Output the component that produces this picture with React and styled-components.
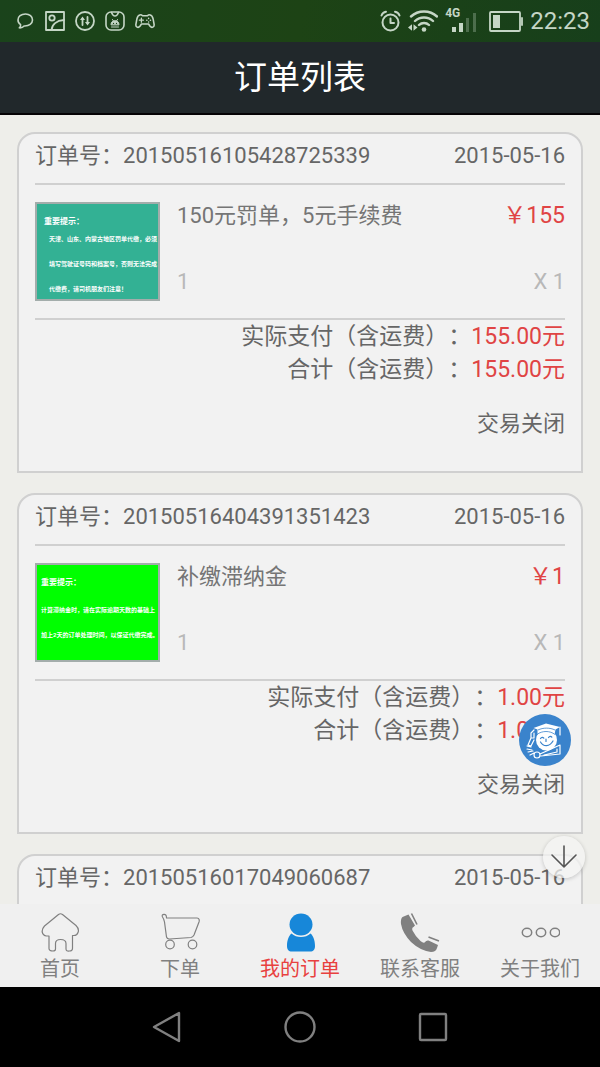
import React from 'react'
import styled, { createGlobalStyle, css } from 'styled-components'

const GlobalStyle = createGlobalStyle`
    * {
        box-sizing: border-box;
    }
    body {
        margin: 0;
        background: #eeeeea;
        font-family: Roboto, 'Noto Sans CJK SC', sans-serif;
        text-spacing-trim: space-all;
    }
    button {
        border: 0;
        padding: 0;
        background: none;
        font: inherit;
        cursor: pointer;
    }
`

const Screen = styled.div`
    display: flex;
    flex-direction: column;
    height: 100vh;
`

const StatusBar = styled.div`
    display: flex;
    align-items: center;
    justify-content: space-between;
    flex: none;
    height: 42px;
    padding: 0 10px 0 15px;
    background: linear-gradient(100deg, #1a431b, #1d4315 50%, #173f1b);
    color: #c5d6c6;
`

const StatusGroup = styled.div`
    display: flex;
    align-items: center;
    gap: ${({ $gap }) => $gap}px;
`

const Clock = styled.time`
    font-size: 24px;
    line-height: 42px;
`

const Signal = styled.div`
    display: flex;
    align-items: flex-start;
    height: 25px;
    padding-right: 5px;
`

const Network = styled.span`
    margin-right: -8px;
    font-size: 12px;
    line-height: 8px;
    font-weight: 700;
`

const TitleBar = styled.header`
    display: flex;
    align-items: center;
    justify-content: center;
    flex: none;
    height: 73px;
    background: #21282b;
    border-bottom: 2px solid #050305;
`

const Title = styled.h1`
    margin: 0;
    font-size: 33px;
    line-height: 40px;
    font-weight: 400;
    color: #ffffff;
`

const Main = styled.main`
    position: relative;
    flex: 1;
    min-height: 0;
`

const OrderList = styled.div`
    display: flex;
    flex-direction: column;
    gap: 20px;
    height: 100%;
    padding: 17px 17px 0;
    overflow-y: auto;
    scrollbar-width: none;
`

const Card = styled.article`
    flex: none;
    padding: 0 16px 29px;
    background: #f2f2f2;
    border: 2px solid #d0d0d0;
    border-radius: 18px 18px 0 0;
    font-size: 22px;
    line-height: 36px;
    color: #666666;
`

const CardHead = styled.div`
    display: flex;
    justify-content: space-between;
    padding: 4px 0 9px;
    border-bottom: 2px solid #d0d0d0;
`

const Item = styled.div`
    display: flex;
    gap: 17px;
    padding: 17px 0;
    border-bottom: 2px solid #d0d0d0;
`

const Thumb = styled.div`
    flex: none;
    width: 125px;
    height: 99px;
    padding: 14px 0 0 ${({ $inset }) => $inset}px;
    background: ${({ $color }) => $color};
    border: 2px solid #a3adab;
    color: #ffffff;
    white-space: nowrap;
    overflow: hidden;
`

const ThumbTitle = styled.div`
    font-size: 8px;
    line-height: 8px;
    font-weight: 700;
`

const ThumbText = styled.div`
    padding-top: ${({ $top }) => $top}px;
    padding-left: ${({ $indent }) => $indent}px;
    font-size: 6px;
    line-height: 25px;
    font-weight: 700;
`

const ItemInfo = styled.div`
    display: flex;
    flex: 1;
    flex-direction: column;
    justify-content: space-between;
`

const ItemRow = styled.div`
    display: flex;
    justify-content: space-between;
    line-height: ${({ $muted }) => ($muted ? 38 : 28)}px;
    color: ${({ $muted }) => ($muted ? '#b8b8b8' : '#757575')};
`

const Price = styled.span`
    font-size: 23px;
    color: #e04444;
`

const Totals = styled.div`
    font-size: 23px;
    line-height: 33px;
    text-align: right;
`

const State = styled.div`
    padding-top: 20px;
    text-align: right;
`

const floating = css`
    position: absolute;
    display: flex;
    align-items: center;
    justify-content: center;
    border-radius: 50%;
`

const HelpButton = styled.button`
    ${floating}
    right: 29px;
    bottom: 138px;
    width: 52px;
    height: 52px;
    background: #3a83cc;
`

const DownButton = styled.button`
    ${floating}
    right: 15px;
    bottom: 26px;
    width: 42px;
    height: 42px;
    background: rgba(244, 244, 243, 0.75);
    box-shadow: 0 1px 4px rgba(0, 0, 0, 0.2);
    color: #555555;
`

const TabBar = styled.nav`
    display: grid;
    grid-template-columns: repeat(5, 1fr);
    flex: none;
    height: 83px;
    padding-top: 8px;
    background: #f0f0f0;
`

const Tab = styled.a`
    display: flex;
    flex-direction: column;
    align-items: center;
    font-size: 20px;
    line-height: 30px;
    text-decoration: none;
    color: ${({ $active }) => ($active ? '#e8413f' : '#808080')};
`

const SystemBar = styled.div`
    display: flex;
    align-items: center;
    justify-content: center;
    gap: 101px;
    flex: none;
    height: 80px;
    background: #000000;
`

const SystemButton = styled.button`
    display: flex;
    color: #808080;
`

const Svg = ({ w, h, children, sw = 2 }) => (
    <svg
        width={w}
        height={h}
        viewBox={`0 0 ${w} ${h}`}
        fill="none"
        stroke="currentColor"
        strokeWidth={sw}
        strokeLinecap="round"
        strokeLinejoin="round"
        aria-hidden="true"
    >
        {children}
    </svg>
)

const ChatIcon = () => (
    <Svg w={20} h={20} sw={1.6}>
        <path d="M10.500 3C6 3 3 5.600 3 8.900c0 2 1 3.700 2.600 4.700.2 1.300-.2 2.400-1.300 3.200 2.100.2 3.600-.4 4.800-1.800 5 .3 8.400-2.600 8.400-6.100C17.500 5.600 14.500 3 10.500 3z" />
    </Svg>
)

const PictureIcon = () => (
    <Svg w={20} h={20} sw={1.8}>
        <rect x="1" y="1" width="18" height="18" />
        <circle cx="7" cy="7" r="2.700" />
        <path d="M6.500 19C7 13.500 11.500 9.500 19 9" />
    </Svg>
)

const TransferIcon = () => (
    <Svg w={20} h={20} sw={1.8}>
        <circle cx="10" cy="10" r="9" />
        <path d="M7.500 14V8M12.500 6v6" />
        <path d="M5 9l2.500-3.500L10 9zM10 11l2.500 3.500L15 11z" fill="currentColor" stroke="none" />
    </Svg>
)

const RobotIcon = () => (
    <Svg w={20} h={20} sw={1.6}>
        <rect x="1" y="1" width="18" height="18" rx="5" />
        <path d="M6.500 1.500C7.500 4 8.500 5 10 5s2.500-1 3.500-3.500" />
        <path d="M6 13.500c0-2.300 1.600-3.800 4-3.800s4 1.500 4 3.800zM7.500 8.500l.8 1.200M12.500 8.500l-.8 1.200" fill="currentColor" strokeWidth="1" />
        <path d="M6.500 16h7" strokeWidth="1" />
        <path d="M8.500 12.300v.1M11.500 12.300v.1" stroke="#1c431a" strokeWidth="1.300" />
    </Svg>
)

const GamepadIcon = () => (
    <Svg w={20} h={20} sw={1.6}>
        <path d="M5.500 3.800c1.200-.4 1.700.9 2.500.9h4c.8 0 1.300-1.300 2.500-.9 2.300.5 3.100 1.600 3.600 4l1 5.500c.4 2.900-2.300 4-4 2l-1.600-2.300H6.500l-1.600 2.300c-1.700 2-4.400.9-4-2l1-5.500c.5-2.400 1.300-3.500 3.600-4z" />
        <path d="M6.400 7.200v4M4.400 9.200h4" strokeWidth="1.300" />
        <path d="M13.600 7.300v.1M13.600 11v.1M11.800 9.200h.1M15.400 9.200h.1" strokeWidth="1.500" />
    </Svg>
)

const AlarmIcon = () => (
    <Svg w={21} h={22} sw={2}>
        <circle cx="10.500" cy="12.500" r="8" />
        <path d="M10.500 8.500v4.500h3.500M1.500 5.500c.7-2 2.300-3.300 4.500-3.800M19.500 5.500c-.7-2-2.300-3.300-4.500-3.800" />
    </Svg>
)

const WifiIcon = () => (
    <Svg w={30} h={22} sw={2.400}>
        <path d="M3 6.500c7.200-6.700 18.800-6.700 26 0M7 11c5-4.700 13-4.700 18 0M11 15c2.800-2.700 7.200-2.700 10 0" />
        <circle cx="16" cy="19.500" r="2.300" fill="currentColor" stroke="none" />
        <path d="M0 17.500l4-3.300v6.600zM9.500 17.500l-4-3.300v6.600z" fill="currentColor" stroke="none" />
    </Svg>
)

const BarsIcon = () => (
    <svg width="25" height="24" viewBox="0 0 25 24" fill="currentColor" aria-hidden="true">
        <rect x="0" y="18" width="4" height="5" />
        <rect x="7" y="14" width="4" height="9" />
        <rect x="14" y="9" width="3" height="14" opacity="0.3" />
        <rect x="21" y="4" width="3" height="19" opacity="0.3" />
    </svg>
)

const BatteryIcon = () => (
    <Svg w={34} h={21} sw={1.800}>
        <rect x="1" y="1" width="30" height="19" rx="1" />
        <path d="M33 7v7" />
        <rect x="4" y="4" width="7" height="13" fill="currentColor" stroke="none" />
    </Svg>
)

const HomeIcon = () => (
    <Svg w={40} h={42} sw={1.2}>
        <path d="M18.500 2.500Q20.500 1 22.500 2.500L36 13.500Q39.500 17 38 20.500Q37 23.500 34 23.500H32.500V36.500Q32.500 39 29.500 39Q26 39.500 26 37V31.500Q26 27.500 20.500 27.500Q15.500 27.500 15.500 31.500V37Q15.500 39 13 39Q9 39 9 36.500V24H6.500Q3 23.500 2.200 20Q1.800 17 4.500 14z" />
    </Svg>
)

const CartIcon = () => (
    <Svg w={40} h={42} sw={1.2}>
        <path d="M6.500 6H37Q40 6.500 39 10L34 23Q33 25 31 25.500L9.500 27Q7 27 6.500 25L4.500 10Q4 7 2.500 5Q1.500 2.500 4 2.300Q6.500 2.200 6.500 6z" />
        <circle cx="10" cy="32.500" r="4.300" />
        <circle cx="32.500" cy="32.500" r="4.300" />
    </Svg>
)

const UserIcon = () => (
    <svg width="40" height="42" viewBox="0 0 40 42" fill="#1787d9" aria-hidden="true">
        <ellipse cx="21" cy="12.500" rx="11.500" ry="11" />
        <path d="M11.500 21.500c5 4.800 14 4.800 19 0 2.500 2 4.500 6.500 4.500 12.500 0 3.500-1.500 5.500-5 5.500H12c-3.500 0-5-2-5-5.500 0-6 2-10.500 4.500-12.500z" />
    </svg>
)

const PhoneIcon = () => (
    <svg width="40" height="42" viewBox="0 0 40 42" fill="currentColor" aria-hidden="true">
        <path d="M8.500 2.500L2.500 5Q0.500 6.500 1 12Q2.500 21 11 30Q20 38.500 31 40Q36 40 37 36L38 33L28.500 28.500Q26.500 28 24.500 30.500Q23.500 31.500 20.500 29Q15.500 24.500 12.500 18.500Q11.500 16 13.500 15L15 13.500z" />
        <path d="M11.500 1.500L17 12.500M28.500 25L39 29" stroke="currentColor" strokeWidth="1.600" />
    </svg>
)

const MoreIcon = () => (
    <Svg w={40} h={42} sw={1.500}>
        <ellipse cx="7" cy="20.500" rx="4.700" ry="4.200" />
        <ellipse cx="21" cy="20.500" rx="4.700" ry="4.200" />
        <ellipse cx="35" cy="20.500" rx="4.700" ry="4.200" />
    </Svg>
)

const ScholarIcon = () => (
    <svg width="52" height="52" viewBox="0 0 52 52" fill="#ffffff" aria-hidden="true">
        <ellipse cx="27.500" cy="26" rx="10.500" ry="10.500" />
        <path d="M14.500 14L27 9.500l14 3.500-4.500 2.500-1 5c-5-3.500-12-3.500-17 0v-5z" />
        <path d="M18 20.500c5-4 13-4 18 0M19 16c5-2.500 12-2.500 17 0" fill="none" stroke="#3a83cc" strokeWidth="0.800" />
        <path d="M21.500 28c3 5 9 5 12.500-1M21.500 24.500c1-1.500 2.500-1.500 3.300-.3M29.500 23.500c1-1.500 2.500-1.500 3.300-.3M27 25v2.500" fill="none" stroke="#3a83cc" strokeWidth="1.200" strokeLinecap="round" />
        <path d="M41 13v8M15 16l-3 3v5h3v-5M12 24l-3 7 3 1 3-6M8 32l4 1M8 35l5 1M9 38l5-1M11 41l4-2M15 41a3 3 0 106 0 3 3 0 10-6 0M21 40l20-9v9l-19 2M25 41l13-3v-3" fill="none" stroke="#ffffff" strokeWidth="1.200" strokeLinecap="round" strokeLinejoin="round" />
    </svg>
)

const orders = [
    {
        id: '20150516105428725339',
        date: '2015-05-16',
        name: '150元罚单，5元手续费',
        price: '155',
        total: '155.00元',
        thumb: {
            color: '#33b194',
            inset: 7,
            indent: 5,
            top: 0,
            lines: ['天津、山东、内蒙古地区罚单代缴，必须', '填写驾驶证号码和档案号，否则无法完成', '代缴费，请司机朋友们注意！'],
        },
    },
    {
        id: '20150516404391351423',
        date: '2015-05-16',
        name: '补缴滞纳金',
        price: '1',
        total: '1.00元',
        thumb: {
            color: '#00ff00',
            inset: 4,
            indent: 0,
            top: 10,
            lines: ['计算滞纳金时，请在实际逾期天数的基础上', '加上2天的订单处理时间，以保证代缴完成。'],
        },
    },
    {
        id: '20150516017049060687',
        date: '2015-05-16',
    },
]

const tabs = [
    { label: '首页', Icon: HomeIcon },
    { label: '下单', Icon: CartIcon },
    { label: '我的订单', Icon: UserIcon, active: true },
    { label: '联系客服', Icon: PhoneIcon },
    { label: '关于我们', Icon: MoreIcon },
]

const OrderCard = ({ id, date, name, price, total, thumb }) => (
    <Card>
        <CardHead>
            <span>订单号：{id}</span>
            <time>{date}</time>
        </CardHead>
        {thumb && <>
            <Item>
                <Thumb $color={thumb.color} $inset={thumb.inset}>
                    <ThumbTitle>重要提示：</ThumbTitle>
                    <ThumbText $indent={thumb.indent} $top={thumb.top}>
                        {thumb.lines.map((line) => <div key={line}>{line}</div>)}
                    </ThumbText>
                </Thumb>
                <ItemInfo>
                    <ItemRow>
                        <span>{name}</span>
                        <Price>￥{price}</Price>
                    </ItemRow>
                    <ItemRow $muted>
                        <span>1</span>
                        <span>X 1</span>
                    </ItemRow>
                </ItemInfo>
            </Item>
            <Totals>
                <div>实际支付（含运费）：<Price>{total}</Price></div>
                <div>合计（含运费）：<Price>{total}</Price></div>
            </Totals>
            <State>交易关闭</State>
        </>}
    </Card>
)

const App = () => {
    return <Screen>
        <GlobalStyle />
        <StatusBar>
            <StatusGroup $gap={10}>
                <ChatIcon />
                <PictureIcon />
                <TransferIcon />
                <RobotIcon />
                <GamepadIcon />
            </StatusGroup>
            <StatusGroup $gap={7}>
                <AlarmIcon />
                <WifiIcon />
                <Signal>
                    <Network>4G</Network>
                    <BarsIcon />
                </Signal>
                <BatteryIcon />
                <Clock>22:23</Clock>
            </StatusGroup>
        </StatusBar>
        <TitleBar>
            <Title>订单列表</Title>
        </TitleBar>
        <Main>
            <OrderList>
                {orders.map((order) => <OrderCard key={order.id} {...order} />)}
            </OrderList>
            <HelpButton aria-label="帮助">
                <ScholarIcon />
            </HelpButton>
            <DownButton aria-label="向下">
                <Svg w={28} h={26} sw={1.6}>
                    <path d="M14 2v21M2 11l12 12 12-12" />
                </Svg>
            </DownButton>
        </Main>
        <TabBar>
            {tabs.map(({ label, Icon, active }) => (
                <Tab key={label} href="#" $active={active}>
                    <Icon />
                    {label}
                </Tab>
            ))}
        </TabBar>
        <SystemBar>
            <SystemButton aria-label="返回">
                <Svg w={32} h={32} sw={2.400}>
                    <path d="M3 16L28 2v28z" />
                </Svg>
            </SystemButton>
            <SystemButton aria-label="主页">
                <Svg w={32} h={32} sw={2.400}>
                    <circle cx="16" cy="16" r="14.500" />
                </Svg>
            </SystemButton>
            <SystemButton aria-label="最近任务">
                <Svg w={32} h={32} sw={2.400}>
                    <rect x="3" y="3" width="26" height="26" rx="1" />
                </Svg>
            </SystemButton>
        </SystemBar>
    </Screen>
}

export default App
